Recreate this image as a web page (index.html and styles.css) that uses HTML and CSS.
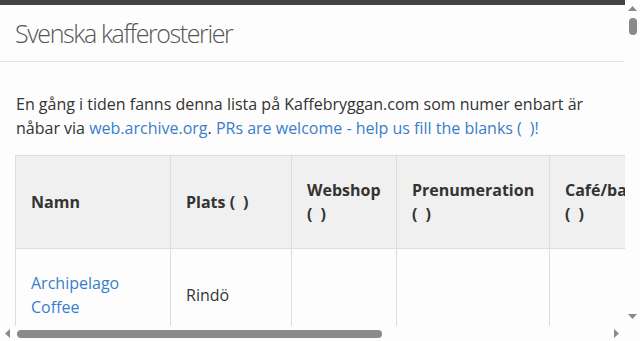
FILE: index.html
```html
<!DOCTYPE html>
<html lang="sv">
<head>
<meta charset="utf-8">
<title>Svenska kafferosterier</title>
<link rel="stylesheet" href="styles.css">
</head>
<body>
<div class="topbar"></div>
<header class="page-header">
  <h1 class="title">Svenska kafferosterier</h1>
</header>
<main class="content">
  <p class="intro">En gång i tiden fanns denna lista på Kaffebryggan.com som numer enbart är nåbar via <a href="#">web.archive.org</a>. <a href="#">PRs are welcome - help us fill the blanks (<span class="icon-gap"></span>)!</a></p>
  <table class="roasters">
    <thead>
      <tr>
        <th class="c-name">Namn</th>
        <th class="c-place">Plats (<span class="ic"></span>)</th>
        <th class="c-shop">Webshop (<span class="ic"></span>)</th>
        <th class="c-sub">Prenumeration (<span class="ic"></span>)</th>
        <th class="c-cafe">Café/bar (<span class="ic"></span>)</th>
        <th class="c-org">Ekologiskt (<span class="ic"></span>)</th>
        <th class="c-note">Kommentar</th>
      </tr>
    </thead>
    <tbody>
      <tr><td><a href="#">Archipelago Coffee</a></td><td>Rindö</td><td></td><td></td><td></td><td></td><td></td></tr>
      <tr><td><a href="#">Arvid Nordquist</a></td><td>Solna</td><td></td><td></td><td></td><td></td><td></td></tr>
      <tr><td><a href="#">Bergstrands Kafferosteri</a></td><td>Göteborg</td><td></td><td></td><td></td><td></td><td></td></tr>
      <tr><td><a href="#">Björnbärs Rosteri</a></td><td>Umeå</td><td></td><td></td><td></td><td></td><td></td></tr>
      <tr><td><a href="#">Classic Kaffe</a></td><td>Örebro</td><td></td><td></td><td></td><td></td><td></td></tr>
      <tr><td><a href="#">Da Matteo</a></td><td>Göteborg</td><td></td><td></td><td></td><td></td><td></td></tr>
      <tr><td><a href="#">Drop Coffee</a></td><td>Stockholm</td><td></td><td></td><td></td><td></td><td></td></tr>
      <tr><td><a href="#">Fröjds Kafferosteri</a></td><td>Jönköping</td><td></td><td></td><td></td><td></td><td></td></tr>
      <tr><td><a href="#">Gringo Nordic</a></td><td>Stockholm</td><td></td><td></td><td></td><td></td><td></td></tr>
      <tr><td><a href="#">Gåsakulla Kafferosteri</a></td><td>Ljungby</td><td></td><td></td><td></td><td></td><td></td></tr>
      <tr><td><a href="#">Johan &amp; Nyström</a></td><td>Stockholm</td><td></td><td></td><td></td><td></td><td></td></tr>
      <tr><td><a href="#">Kafferosteriet Koppi</a></td><td>Helsingborg</td><td></td><td></td><td></td><td></td><td></td></tr>
      <tr><td><a href="#">Kahls Kaffe</a></td><td>Stockholm</td><td></td><td></td><td></td><td></td><td></td></tr>
      <tr><td><a href="#">Lilla Kafferosteriet</a></td><td>Malmö</td><td></td><td></td><td></td><td></td><td></td></tr>
      <tr><td><a href="#">Love Coffee Roasters</a></td><td>Ystad</td><td></td><td></td><td></td><td></td><td></td></tr>
      <tr><td><a href="#">Löfbergs</a></td><td>Karlstad</td><td></td><td></td><td></td><td></td><td></td></tr>
      <tr><td><a href="#">Morgon Coffee Roasters</a></td><td>Göteborg</td><td></td><td></td><td></td><td></td><td></td></tr>
      <tr><td><a href="#">Per Nordby Kafferosteri</a></td><td>Borlänge</td><td></td><td></td><td></td><td></td><td></td></tr>
      <tr><td><a href="#">Solde Kaffebar</a></td><td>Malmö</td><td></td><td></td><td></td><td></td><td></td></tr>
      <tr><td><a href="#">Standout Coffee</a></td><td>Stockholm</td><td></td><td></td><td></td><td></td><td></td></tr>
      <tr><td><a href="#">Viktors Kaffe</a></td><td>Malmö</td><td></td><td></td><td></td><td></td><td></td></tr>
      <tr><td><a href="#">Zoégas</a></td><td>Helsingborg</td><td></td><td></td><td></td><td></td><td></td></tr>
    </tbody>
  </table>
</main>
<div class="vscroll" aria-hidden="true">
  <svg class="arrow up" width="15" height="15" viewBox="0 0 15 15"><polygon points="3,11 12,11 7.5,6" fill="#8a8a8a"/></svg>
  <div class="vthumb"></div>
  <svg class="arrow down" width="15" height="15" viewBox="0 0 15 15"><polygon points="3,3 12,3 7.5,8" fill="#8a8a8a"/></svg>
</div>
<div class="hscroll" aria-hidden="true">
  <svg class="arrow left" width="15" height="15" viewBox="0 0 15 15"><polygon points="10,3 10,12 5,7.5" fill="#8a8a8a"/></svg>
  <div class="htrack"><div class="hthumb"></div></div>
  <svg class="arrow right" width="15" height="15" viewBox="0 0 15 15"><polygon points="4,3 4,12 9,7.5" fill="#8a8a8a"/></svg>
</div>
<div class="scorner" aria-hidden="true"></div>
</body>
</html>
```
FILE: styles.css
```css
html, body {
  margin: 0;
  padding: 0;
  background: #fdfdfd;
  overflow: hidden;
}
body {
  font-family: "Open Sans", "Noto Sans", sans-serif;
  font-size: 16px;
  line-height: 24px;
  color: #333;
}
a {
  color: #3a7dc9;
  text-decoration: none;
}
.topbar {
  height: 5px;
  background: #444;
}
.page-header {
  border-bottom: 1px solid #e5e5e5;
  padding: 12px 16px 12px 15px;
}
.title {
  margin: 0;
  font-size: 25px;
  line-height: 32px;
  font-weight: 300;
  letter-spacing: -1.4px;
  color: #555;
}
.content {
  padding: 30px 15px 0;
}
.intro {
  margin: 0 0 15px 1px;
}
.icon-gap {
  display: inline-block;
  width: 8px;
}
.ic {
  display: inline-block;
  width: 8px;
}
.roasters {
  border-collapse: collapse;
  table-layout: fixed;
  width: 1005px;
}
.roasters th,
.roasters td {
  box-sizing: border-box;
  border: 1px solid #ddd;
  padding: 22px 16px 22px 15px;
  text-align: left;
  vertical-align: middle;
}
.roasters th {
  background: #f0f0f0;
  font-weight: 700;
}
.c-name { width: 155px; }
.c-place { width: 121px; }
.c-shop { width: 105px; }
.c-sub { width: 153px; }
.c-cafe { width: 110px; }
.c-org { width: 130px; }
.c-note { width: 231px; }

/* drawn browser scrollbars */
.vscroll {
  position: fixed;
  top: 0;
  right: 0;
  width: 15px;
  height: 326px;
  background: #fdfdfd;
  display: flex;
  flex-direction: column;
  align-items: center;
}
.vscroll .arrow { display: block; flex: none; }
.vthumb {
  margin-top: 3px;
  width: 8px;
  height: 17px;
  border-radius: 4px;
  background: #8a8a8a;
}
.vscroll .down {
  margin-top: auto;
}
.hscroll {
  position: fixed;
  left: 0;
  bottom: 0;
  width: 625px;
  height: 15px;
  background: #fdfdfd;
  display: flex;
  align-items: center;
}
.hscroll .arrow { display: block; flex: none; }
.htrack {
  flex: 1;
  padding-left: 2px;
  display: flex;
  align-items: center;
}
.hthumb {
  width: 365px;
  height: 8px;
  border-radius: 4px;
  background: #8a8a8a;
}
.scorner {
  position: fixed;
  right: 0;
  bottom: 0;
  width: 15px;
  height: 15px;
  background: #fdfdfd;
}
```
